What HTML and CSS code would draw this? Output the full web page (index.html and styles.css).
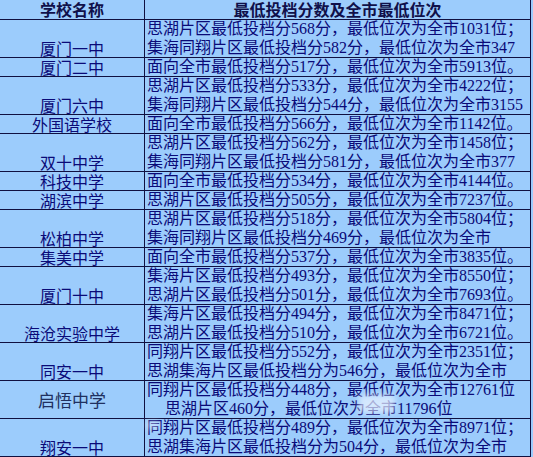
FILE: index.html
```html
<!DOCTYPE html>
<html lang="zh-CN">
<head>
<meta charset="utf-8">
<title>学校最低投档分数</title>
<link rel="stylesheet" href="styles.css">
</head>
<body>
<div class="sheet">
  <div class="cell head">学校名称</div>
  <div class="cell head">最低投档分数及全市最低位次</div>

  <div class="cell name r2">厦门一中</div>
  <div class="cell info r2"><span>思湖片区最低投档分568分，最低位次为全市1031位；</span><span>集海同翔片区最低投档分582分，最低位次为全市347</span></div>

  <div class="cell name r1">厦门二中</div>
  <div class="cell info r1"><span>面向全市最低投档分517分，最低位次为全市5913位。</span></div>

  <div class="cell name r2">厦门六中</div>
  <div class="cell info r2"><span>思湖片区最低投档分533分，最低位次为全市4222位；</span><span>集海同翔片区最低投档分544分，最低位次为全市3155</span></div>

  <div class="cell name r1">外国语学校</div>
  <div class="cell info r1"><span>面向全市最低投档分566分，最低位次为全市1142位。</span></div>

  <div class="cell name r2">双十中学</div>
  <div class="cell info r2"><span>思湖片区最低投档分562分，最低位次为全市1458位；</span><span>集海同翔片区最低投档分581分，最低位次为全市377</span></div>

  <div class="cell name r1">科技中学</div>
  <div class="cell info r1"><span>面向全市最低投档分534分，最低位次为全市4144位。</span></div>

  <div class="cell name r1">湖滨中学</div>
  <div class="cell info r1"><span>思湖片区最低投档分505分，最低位次为全市7237位。</span></div>

  <div class="cell name r2">松柏中学</div>
  <div class="cell info r2"><span>思湖片区最低投档分518分，最低位次为全市5804位；</span><span>集海同翔片区最低投档分469分，最低位次为全市</span></div>

  <div class="cell name r1">集美中学</div>
  <div class="cell info r1"><span>面向全市最低投档分537分，最低位次为全市3835位。</span></div>

  <div class="cell name r2">厦门十中</div>
  <div class="cell info r2"><span>集海片区最低投档分493分，最低位次为全市8550位；</span><span>思湖片区最低投档分501分，最低位次为全市7693位。</span></div>

  <div class="cell name r2">海沧实验中学</div>
  <div class="cell info r2"><span>集海片区最低投档分494分，最低位次为全市8471位；</span><span>思湖片区最低投档分510分，最低位次为全市6721位。</span></div>

  <div class="cell name r2">同安一中</div>
  <div class="cell info r2"><span>同翔片区最低投档分552分，最低位次为全市2351位；</span><span>思湖集海片区最低投档分为546分，最低位次为全市</span></div>

  <div class="cell name r2 mid">启悟中学</div>
  <div class="cell info r2 mark-host"><span>同翔片区最低投档分448分，最低位次为全市12761位</span><span class="indent">思湖片区460分，最低位次为全市11796位</span><i class="mark mark-a"></i></div>

  <div class="cell name r2">翔安一中</div>
  <div class="cell info r2 mark-host"><span>同翔片区最低投档分489分，最低位次为全市8971位；</span><span>思湖集海片区最低投档分为504分，最低位次为全市</span><i class="mark mark-b"></i></div>
</div>
</body>
</html>
```

FILE: styles.css
```css
html, body {
  margin: 0;
  padding: 0;
  background: #9cccfc;
}

body {
  width: 533px;
  height: 457px;
  overflow: hidden;
  font-family: "Liberation Serif", "Noto Sans CJK SC", serif;
  font-size: 16px;
  color: #0a0a78;
}

.sheet {
  display: grid;
  grid-template-columns: 144px 385px;
  column-gap: 1px;
  row-gap: 1px;
  width: 530px;
  padding-right: 1px;
  padding-bottom: 1px;
  background: #101040;
}

.cell {
  background: #9cccfc;
  white-space: nowrap;
}

.head {
  height: 19px;
  line-height: 19px;
  text-align: center;
  font-weight: bold;
  color: #10104a;
  font-family: "Noto Sans CJK SC", sans-serif;
}

.r1 { height: 18px; }
.r2 { height: 37px; }

.name {
  display: flex;
  align-items: flex-end;
  justify-content: center;
  line-height: 18px;
  font-family: "Noto Sans CJK SC", sans-serif;
}

.name.mid {
  align-items: center;
  font-size: 17px;
  color: #203060;
}

.info {
  display: flex;
  flex-direction: column;
  justify-content: flex-end;
  padding-left: 2px;
  line-height: 18.5px;
}

.info span {
  display: block;
  height: 18.5px;
}

.indent {
  padding-left: 18px;
}

.mark-host {
  position: relative;
}

.mark {
  position: absolute;
  background: rgba(236, 244, 255, 0.7);
  filter: blur(3px);
}

.mark-a {
  left: 214px;
  top: 14px;
  width: 36px;
  height: 18px;
}

.mark-b {
  left: 2px;
  top: 3px;
  width: 12px;
  height: 6px;
}
```
